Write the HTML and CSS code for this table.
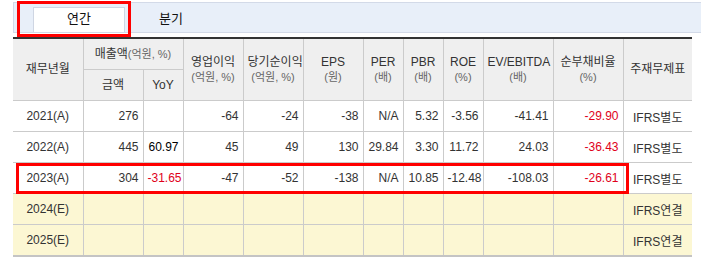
FILE: index.html
```html
<!DOCTYPE html>
<html lang="ko">
<head>
<meta charset="utf-8">
<link rel="stylesheet" href="styles.css">
</head>
<body>
<div class="wrap">
  <div class="tabs">
    <div class="tab active">연간</div>
    <div class="tab">분기</div>
  </div>
  <table class="fin">
    <colgroup>
      <col style="width:70px"><col style="width:60px"><col style="width:40px"><col style="width:60px"><col style="width:60px"><col style="width:60px"><col style="width:40px"><col style="width:40px"><col style="width:40px"><col style="width:70px"><col style="width:70px"><col style="width:69px">
    </colgroup>
    <thead>
      <tr class="h1">
        <th rowspan="2">재무년월</th>
        <th colspan="2">매출액<span class="unit">(억원, %)</span></th>
        <th rowspan="2">영업이익<br><span class="unit">(억원, %)</span></th>
        <th rowspan="2">당기순이익<br><span class="unit">(억원, %)</span></th>
        <th rowspan="2">EPS<br><span class="unit">(원)</span></th>
        <th rowspan="2">PER<br><span class="unit">(배)</span></th>
        <th rowspan="2">PBR<br><span class="unit">(배)</span></th>
        <th rowspan="2">ROE<br><span class="unit">(%)</span></th>
        <th rowspan="2">EV/EBITDA<br><span class="unit">(배)</span></th>
        <th rowspan="2">순부채비율<br><span class="unit">(%)</span></th>
        <th rowspan="2">주재무제표</th>
      </tr>
      <tr class="h2">
        <th>금액</th>
        <th>YoY</th>
      </tr>
    </thead>
    <tbody>
      <tr>
        <td class="c">2021(A)</td><td>276</td><td></td><td>-64</td><td>-24</td><td>-38</td><td>N/A</td><td>5.32</td><td>-3.56</td><td>-41.41</td><td class="neg">-29.90</td><td class="c">IFRS별도</td>
      </tr>
      <tr>
        <td class="c">2022(A)</td><td>445</td><td class="pos">60.97</td><td>45</td><td>49</td><td>130</td><td>29.84</td><td>3.30</td><td>11.72</td><td>24.03</td><td class="neg">-36.43</td><td class="c">IFRS별도</td>
      </tr>
      <tr class="mark">
        <td class="c">2023(A)</td><td>304</td><td class="neg">-31.65</td><td>-47</td><td>-52</td><td>-138</td><td>N/A</td><td>10.85</td><td>-12.48</td><td>-108.03</td><td class="neg">-26.61</td><td class="c">IFRS별도</td>
      </tr>
      <tr class="est">
        <td class="c">2024(E)</td><td></td><td></td><td></td><td></td><td></td><td></td><td></td><td></td><td></td><td></td><td class="c">IFRS연결</td>
      </tr>
      <tr class="est">
        <td class="c">2025(E)</td><td></td><td></td><td></td><td></td><td></td><td></td><td></td><td></td><td></td><td></td><td class="c">IFRS연결</td>
      </tr>
    </tbody>
  </table>
  <div class="hl hl-tab"></div>
  <div class="hl hl-row"></div>
</div>
</body>
</html>
```
FILE: styles.css
```css
html, body {
  margin: 0;
  padding: 0;
  background: #fff;
}
body {
  font-family: "Liberation Sans", "Noto Sans CJK KR", sans-serif;
  font-size: 12px;
  color: #333;
}
.wrap {
  position: relative;
  padding: 2px 0 0 13px;
  width: 680px;
}
.tabs {
  display: flex;
  height: 29px;
  border: 1px solid #d3dae8;
  background: #e8eff9;
  padding-left: 19px;
  align-items: flex-end;
  width: 678px;
}
.tab {
  width: 92px;
  height: 24px;
  line-height: 22px;
  text-align: center;
  font-size: 13px;
  color: #111;
}
.tab.active {
  background: #fff;
  border: 1px solid #cfd6e3;
  border-bottom: none;
  box-sizing: border-box;
  height: 25px;
}
.fin {
  margin-top: 4px;
  border-collapse: collapse;
  table-layout: fixed;
  width: 679px;
  border-top: 2px solid #333;
  border-bottom: 2px solid #c4c4c4;
}
.fin th, .fin td {
  border: 1px solid #cbcbcb;
  height: 30px;
  padding: 0 4px;
  font-weight: normal;
  white-space: nowrap;
  overflow: hidden;
}
.fin th {
  background: #efefef;
  color: #333;
  text-align: center;
  font-size: 12px;
  line-height: 15px;
}
.fin tr th:first-child, .fin tr td:first-child {
  border-left: none;
}
.fin tr th:last-child, .fin tr td:last-child {
  border-right: none;
}
.fin .h2 th {
  border-left: 1px solid #cbcbcb;
}
.unit {
  color: #666;
  font-size: 11px;
}
.fin td {
  text-align: right;
  color: #333;
}
.fin td.c {
  text-align: center;
}
.fin td.neg {
  color: #e0001a;
}
.fin td.pos {
  color: #000;
}
.fin tr.est td {
  background: #fcf7d3;
}
.hl {
  position: absolute;
  border: 3px solid #f00;
  box-sizing: border-box;
  pointer-events: none;
}
.hl-tab {
  left: 17px;
  top: 1px;
  width: 114px;
  height: 36px;
}
.hl-row {
  left: 16px;
  top: 163px;
  width: 613px;
  height: 31px;
}
```
